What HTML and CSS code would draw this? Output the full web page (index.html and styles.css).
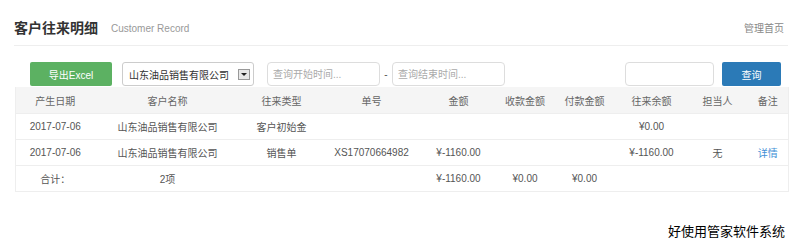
FILE: index.html
```html
<!DOCTYPE html>
<html lang="zh-CN">
<head>
  <meta charset="UTF-8">
  <title>客户往来明细</title>
  <link rel="stylesheet" href="styles.css">
</head>
<body>
  <div class="page">
    <div class="page-head">
      <span class="title">客户往来明细</span>
      <span class="subtitle">Customer Record</span>
      <a class="home-link">管理首页</a>
    </div>

    <div class="toolbar">
      <button class="btn btn-green">导出Excel</button>
      <div class="select">
        <span>山东油品销售有限公司</span>
        <span class="select-arrow"></span>
      </div>
      <input class="date-input" type="text" placeholder="查询开始时间...">
      <span class="dash">-</span>
      <input class="date-input" type="text" placeholder="查询结束时间...">
      <input class="search-input" type="text">
      <button class="btn btn-blue">查询</button>
    </div>

    <table class="record-table">
      <colgroup>
        <col style="width:79px">
        <col style="width:146px">
        <col style="width:82px">
        <col style="width:98px">
        <col style="width:76px">
        <col style="width:57px">
        <col style="width:62px">
        <col style="width:72px">
        <col style="width:60px">
        <col style="width:41px">
      </colgroup>
      <thead>
        <tr>
          <th>产生日期</th>
          <th>客户名称</th>
          <th>往来类型</th>
          <th>单号</th>
          <th>金额</th>
          <th>收款金额</th>
          <th>付款金额</th>
          <th>往来余额</th>
          <th>担当人</th>
          <th>备注</th>
        </tr>
      </thead>
      <tbody>
        <tr>
          <td>2017-07-06</td>
          <td>山东油品销售有限公司</td>
          <td>客户初始金</td>
          <td></td>
          <td></td>
          <td></td>
          <td></td>
          <td>¥0.00</td>
          <td></td>
          <td></td>
        </tr>
        <tr>
          <td>2017-07-06</td>
          <td>山东油品销售有限公司</td>
          <td>销售单</td>
          <td>XS17070664982</td>
          <td>¥-1160.00</td>
          <td></td>
          <td></td>
          <td>¥-1160.00</td>
          <td>无</td>
          <td><a class="detail-link">详情</a></td>
        </tr>
        <tr>
          <td>合计：</td>
          <td>2项</td>
          <td></td>
          <td></td>
          <td>¥-1160.00</td>
          <td>¥0.00</td>
          <td>¥0.00</td>
          <td></td>
          <td></td>
          <td></td>
        </tr>
      </tbody>
    </table>

    <div class="watermark">好使用管家软件系统</div>
  </div>
</body>
</html>
```

FILE: styles.css
```css
body {
  margin: 0;
  font-family: "Liberation Sans", "Noto Sans CJK SC", sans-serif;
  background-color: #fff;
  color: #555;
}

.page {
  padding: 0 12px 0 14px;
}

.page-head {
  display: flex;
  align-items: center;
  height: 36px;
  padding-top: 9px;
  border-bottom: 1px solid #eee;
}

.title {
  font-size: 14px;
  font-weight: bold;
  color: #333;
}

.subtitle {
  margin-left: 13px;
  margin-top: 2px;
  font-size: 10px;
  color: #999;
}

.home-link {
  margin-left: auto;
  padding-right: 4px;
  font-size: 10px;
  color: #888;
}

.toolbar {
  display: flex;
  align-items: center;
  height: 24px;
  margin: 16px 0 1px;
  padding: 0 7px 0 16px;
}

.btn {
  height: 24px;
  border: none;
  border-radius: 2px;
  color: #fff;
  font-family: inherit;
  font-size: 10px;
  cursor: pointer;
}

.btn-green {
  width: 82px;
  background-color: #5cb162;
}

.btn-blue {
  width: 59px;
  margin-left: 8px;
  background-color: #2b7ab7;
}

.select {
  display: flex;
  align-items: center;
  box-sizing: border-box;
  width: 132px;
  height: 24px;
  margin-left: 10px;
  padding-left: 6px;
  border: 1px solid #ccc;
  border-radius: 3px;
  font-size: 10px;
  color: #333;
}

.select-arrow {
  position: relative;
  box-sizing: border-box;
  width: 12px;
  height: 11px;
  margin-left: auto;
  margin-right: 3px;
  border: 1px solid #999;
  background-color: #e8e8e8;
}

.select-arrow::after {
  content: "";
  position: absolute;
  left: 2px;
  top: 3px;
  border-left: 3px solid transparent;
  border-right: 3px solid transparent;
  border-top: 3px solid #222;
}

.date-input,
.search-input {
  box-sizing: border-box;
  height: 24px;
  padding: 0 5px;
  border: 1px solid #ddd;
  border-radius: 4px;
  font-family: inherit;
  font-size: 10px;
  outline: none;
}

.date-input {
  width: 113px;
}

.date-input:first-of-type {
  margin-left: 13px;
}

.date-input::placeholder {
  color: #aaa;
}

.dash {
  width: 12px;
  text-align: center;
  font-size: 10px;
  color: #555;
}

.search-input {
  width: 89px;
  margin-left: auto;
}

.record-table {
  width: 773px;
  margin-left: 1px;
  table-layout: fixed;
  border-collapse: collapse;
  border: 1px solid #eee;
  border-top: none;
  font-size: 10px;
}

.record-table th {
  height: 26px;
  padding: 0;
  background-color: #f5f5f5;
  font-weight: normal;
  color: #666;
  text-align: center;
}

.record-table td {
  height: 25px;
  padding: 0;
  border-top: 1px solid #eee;
  text-align: center;
  white-space: nowrap;
  color: #555;
}

.detail-link {
  color: #3f8fd6;
  cursor: pointer;
}

.watermark {
  margin-top: 29px;
  padding-right: 3px;
  text-align: right;
  font-size: 13px;
  color: #000;
}
```
